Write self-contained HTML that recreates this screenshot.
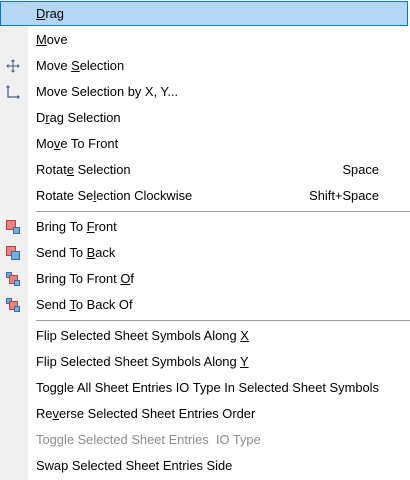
<!DOCTYPE html><html><head><style>
body{margin:0;width:410px;height:480px;background:#fff;position:relative;overflow:hidden;font-family:"Liberation Sans","DejaVu Sans",sans-serif;font-size:12.9px;color:#000}
.g{position:absolute;left:0;top:0;width:28px;height:480px;background:#f0f0f0}
.r{position:absolute;left:36px;height:26px;line-height:27px;white-space:nowrap}
.k{position:absolute;right:31px;height:26px;line-height:27px}
.hl{position:absolute;left:0;top:1px;width:406px;height:23px;background:#b5d7f5;border:1px solid #0078d7}
.s{position:absolute;left:36px;right:0;height:1px;background:#a0a0a0}
u{text-decoration:underline}
.ic{position:absolute;left:5px}
</style></head><body>
<div class="g"></div>
<div class="hl"></div>
<div class="r" style="top:0"><u>D</u>rag</div>
<div class="r" style="top:26px"><u>M</u>ove</div>
<div class="r" style="top:52px">Move <u>S</u>election</div>
<div class="r" style="top:78px">Move Selection by X, Y...</div>
<div class="r" style="top:104px">D<u>r</u>ag Selection</div>
<div class="r" style="top:130px">Mo<u>v</u>e To Front</div>
<div class="r" style="top:156px">Rotat<u>e</u> Selection</div><div class="k" style="top:156px">Space</div>
<div class="r" style="top:182px">Rotate Se<u>l</u>ection Clockwise</div><div class="k" style="top:182px">Shift+Space</div>
<div class="s" style="top:211px"></div>
<div class="r" style="top:213px">Bring To <u>F</u>ront</div>
<div class="r" style="top:239px">Send To <u>B</u>ack</div>
<div class="r" style="top:265px">Bring To Front <u>O</u>f</div>
<div class="r" style="top:291px">Send <u>T</u>o Back Of</div>
<div class="s" style="top:320px"></div>
<div class="r" style="top:322px">Flip Selected Sheet Symbols Along <u>X</u></div>
<div class="r" style="top:348px">Flip Selected Sheet Symbols Along <u>Y</u></div>
<div class="r" style="top:374px">Toggle All Sheet Entries IO Type In Selected Sheet Symbols</div>
<div class="r" style="top:400px">Re<u>v</u>erse Selected Sheet Entries Order</div>
<div class="r" style="top:426px;color:#8d8d8d">Toggle Selected Sheet Entries&nbsp; IO Type</div>
<div class="r" style="top:452px">Swap Selected Sheet Entries Side</div>
<svg class="ic" style="top:58px" width="16" height="16" viewBox="0 0 16 16" fill="none" stroke="#4a5a8a" stroke-width="1"><path d="M8 2v12M2 8h12M6.5 3.5L8 2l1.5 1.5M6.5 12.5L8 14l1.5-1.5M3.5 6.5L2 8l1.5 1.5M12.5 6.5L14 8l-1.5 1.5"/></svg>
<svg class="ic" style="top:84px" width="16" height="16" viewBox="0 0 16 16" fill="none" stroke="#4a5a8a" stroke-width="1.2"><path d="M3 2v11h11M1.5 3.5L3 2l1.5 1.5M12.5 11.5L14 13l-1.5 1.5"/></svg>
<svg class="ic" style="top:219px" width="16" height="16"><rect x="1.5" y="1.5" width="9" height="9" fill="#f08080" stroke="#c04040"/><rect x="8.5" y="8.5" width="6" height="6" fill="#70b0e0" stroke="#3070b0"/></svg>
<svg class="ic" style="top:245px" width="16" height="16"><rect x="1.5" y="1.5" width="9" height="9" fill="#f08080" stroke="#c04040"/><rect x="6.5" y="6.5" width="8" height="8" fill="#70b0e0" stroke="#3070b0"/></svg>
<svg class="ic" style="top:271px" width="16" height="16"><rect x="1.5" y="1.5" width="5" height="5" fill="#70b0e0" stroke="#3070b0"/><rect x="4.5" y="4.5" width="8" height="8" fill="#f08080" stroke="#c04040"/><rect x="9.5" y="9.5" width="5" height="5" fill="#70b0e0" stroke="#3070b0"/></svg>
<svg class="ic" style="top:297px" width="16" height="16"><rect x="1.5" y="1.5" width="5" height="5" fill="#70b0e0" stroke="#3070b0"/><rect x="4.5" y="4.5" width="8" height="8" fill="#f08080" stroke="#c04040"/><rect x="9.5" y="9.5" width="5" height="5" fill="#70b0e0" stroke="#3070b0"/></svg>
</body></html>
